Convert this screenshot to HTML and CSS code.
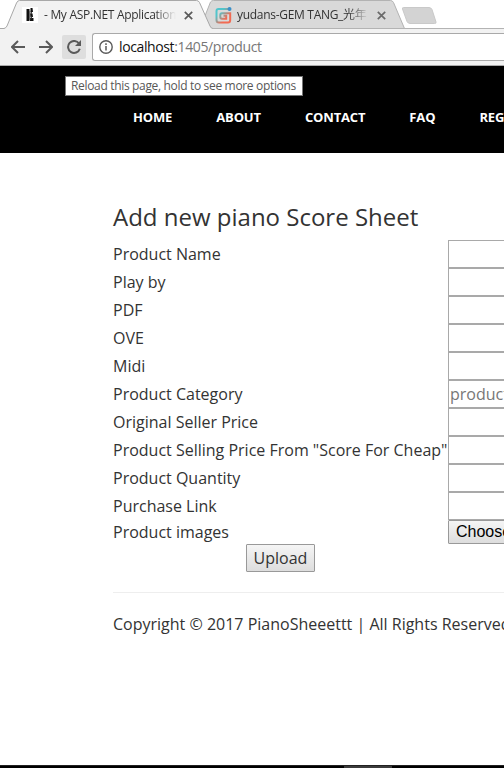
FILE: index.html
```html
<!DOCTYPE html>
<html lang="en">
<head>
<meta charset="utf-8">
<title>Add new piano Score Sheet</title>
<link rel="stylesheet" href="styles.css">
</head>
<body>
<div class="tabs">
  <svg class="tab-shapes" width="504" height="29" viewBox="0 0 504 29">
    <path d="M0 28.500H504" stroke="#b3b3b3"/>
    <path d="M200 28.500L210.500 2Q211.500 .5 213.500 .5H390.500Q392.500 .5 393.500 2.500L404.500 28.500Z" fill="#d9d9d9" stroke="#b3b3b3"/>
    <path d="M0 28.500H4Q6 28 7 26L16.500 3Q17.500 .5 19.500 .5H196.500Q198.500 .5 199.500 2.500L210 26Q211 28.500 213 28.500V29.500H5Z" fill="#f2f2f2"/>
    <path d="M0 28.500H4Q6 28 7 26L16.500 3Q17.500 .5 19.500 .5H196.500Q198.500 .5 199.500 2.500L210 26Q211 28.500 213 28.500" fill="none" stroke="#a8a8a8"/>
    <path d="M403.500 7.500H429Q431 7.500 432 9.500L436 22Q436.500 23.500 434.500 23.500H410Q408 23.500 407 21.500L402.500 9Q402 7.500 403.500 7.500Z" fill="#d3d3d3" stroke="#c9c9c9"/>
  </svg>
  <div class="tab first">
    <svg class="favicon" width="16" height="16" viewBox="0 0 16 16"><path d="M0 0H16V16H0Z" fill="#fff"/><path d="M4.500 2H7.500V14H4.500ZM8.500 1H10.500L11 5H8.500ZM8 6.500H10.500L11 10H8.500ZM8 11H11.500V14H8Z" fill="#111"/><path d="M8 4V13M9.500 5V7M9.500 9.500V11.500" stroke="#444"/></svg>
    <span class="tab-title">- My ASP.NET Application</span>
    <svg class="close" width="9" height="9" viewBox="0 0 9 9"><path d="M.8 .8L8.200 8.200M8.200 .8L.8 8.200" stroke="#5a5a5a" stroke-width="1.700"/></svg>
  </div>
  <div class="tab second">
    <svg class="favicon" width="17" height="17" viewBox="0 0 17 17" fill="none">
      <defs><linearGradient id="g" x1="0" y1="0" x2="1" y2="1"><stop offset=".25" stop-color="#50c5cc"/><stop offset=".7" stop-color="#f26a52"/></linearGradient></defs>
      <path d="M14 2H3.500Q1.500 2 1.500 4V13Q1.500 15.500 4 15.500H13Q15.200 15.500 15.200 13V6.200H7Q5.300 6.200 5.300 8V10Q5.300 11.800 7 11.800H11.200V8.800H8.500" stroke="url(#g)" stroke-width="2"/><circle cx="14.500" cy="2" r="2" fill="#398fc8"/>
    </svg>
    <span class="tab-title">yudans-GEM TANG_光年</span>
    <svg class="close" width="9" height="9" viewBox="0 0 9 9"><path d="M.8 .8L8.200 8.200M8.200 .8L.8 8.200" stroke="#6a6a6a" stroke-width="1.700"/></svg>
  </div>
</div>
<div class="toolbar">
  <svg class="nav-icon" width="14" height="14" viewBox="0 0 14 14"><path d="M14 7H1.500M7 1L1 7L7 13" class="stroke"/></svg>
  <svg class="nav-icon forward" width="14" height="14" viewBox="0 0 14 14"><path d="M0 7H12.500M7 1L13 7L7 13" class="stroke"/></svg>
  <span class="reload"><svg width="14" height="14" viewBox="0 0 14 14"><path d="M12 3.500A6 6 0 1 0 12.800 8.800" class="stroke"/><path d="M14 0V6H8Z" fill="#5a5a5a"/></svg></span>
  <div class="address">
    <svg width="14" height="14" viewBox="0 0 14 14" fill="none"><circle cx="7" cy="7" r="6.200" stroke="#5a5a5a" stroke-width="1.400"/><path d="M7 6V10.500M7 3.300V4.900" stroke="#5a5a5a" stroke-width="1.500"/></svg>
    <span class="url">localhost<span>:1405/product</span></span>
  </div>
  <div class="tooltip">Reload this page, hold to see more options</div>
</div>
<nav class="menu"><a>HOME</a><a>ABOUT</a><a>CONTACT</a><a>FAQ</a><a>REGISTER</a></nav>
<main class="content">
  <h1>Add new piano Score Sheet</h1>
  <div class="form">
    <label>Product Name</label><input>
    <label>Play by</label><input>
    <label>PDF</label><input>
    <label>OVE</label><input>
    <label>Midi</label><input>
    <label>Product Category</label><input placeholder="product category">
    <label>Original Seller Price</label><input>
    <label>Product Selling Price From "Score For Cheap"</label><input>
    <label>Product Quantity</label><input>
    <label>Purchase Link</label><input>
    <label class="last">Product images</label><button class="choose">Choose File</button>
    <div class="action"><button class="upload">Upload</button></div>
  </div>
  <footer>Copyright © 2017 PianoSheeettt | All Rights Reserved</footer>
</main>
<div class="taskbar"><span></span></div>
</body>
</html>
```
FILE: styles.css
```css
* { box-sizing: border-box; }
body {
  margin: 0;
  width: 504px;
  height: 768px;
  overflow: hidden;
  display: flex;
  flex-direction: column;
  background: #fff;
  color: #333;
  font: 16px/24px "Open Sans", "Noto Sans CJK SC", sans-serif;
}
svg { display: block; flex: none; }
.tabs { position: relative; height: 29px; display: flex; flex: none; }
.tab-shapes { position: absolute; left: 0; top: 0; }
.tab { position: relative; display: flex; align-items: center; height: 30px; }
.first { width: 211px; padding-left: 22px; }
.second { padding-left: 4px; }
.tab-title {
  width: 132px;
  margin-left: 6px;
  overflow: hidden;
  white-space: nowrap;
  font-size: 12px;
  letter-spacing: -0.3px;
  line-height: 18px;
  -webkit-mask-image: linear-gradient(90deg, #000 84%, transparent);
  mask-image: linear-gradient(90deg, #000 84%, transparent);
}
.second .tab-title { margin-left: 5px; width: 132px; letter-spacing: -0.3px; }
.close { margin-left: 8px; }
.toolbar {
  position: relative;
  height: 37px;
  flex: none;
  display: flex;
  align-items: center;
  padding-left: 11px;
  background: #f2f2f2;
  border-bottom: 1px solid #aaa;
}
.stroke { fill: none; stroke: #5a5a5a; stroke-width: 2; }
.forward { margin-left: 14px; }
.reload { display: flex; align-items: center; justify-content: center; width: 24px; height: 24px; margin-left: 9px; background: #dedede; border-radius: 2px; }
.address {
  flex: 1;
  display: flex;
  align-items: center;
  height: 28px;
  margin-left: 6px;
  padding-left: 6px;
  background: #fff;
  border: 1px solid #a9a9a9;
  border-right: 0;
  border-radius: 3px 0 0 3px;
}
.url { margin-left: 6px; font-size: 14px; letter-spacing: -0.38px; color: #111; }
.url span { color: #777; }
.tooltip {
  position: absolute;
  left: 65px;
  top: 47px;
  width: 238px;
  height: 20px;
  padding-left: 5px;
  border: 1px solid #767676;
  background: #fff;
  color: #575757;
  font-size: 12px;
  line-height: 18px;
  letter-spacing: -0.33px;
  white-space: nowrap;
}
.menu {
  height: 87px;
  flex: none;
  display: flex;
  gap: 44px;
  padding: 39px 0 0 133px;
  background: #000;
  color: #fff;
  font-size: 13px;
  font-weight: 700;
  letter-spacing: -0.15px;
}
.content { width: 600px; padding: 50px 0 0 113px; }
h1 { margin: 0 0 10px; font-size: 24px; line-height: 27px; font-weight: 400; white-space: nowrap; }
.form { display: grid; grid-template-columns: 335px 260px; }
.form label { height: 28px; line-height: 28px; white-space: nowrap; }
.form .last { height: 24px; line-height: 24px; }
input { height: 28px; width: 260px; margin: 0; padding: 1px; border: 1px solid #a9a9a9; border-radius: 0; font: inherit; }
input::placeholder { color: #777; }
button { margin: 0; border: 1px solid #999; border-radius: 1px; background: linear-gradient(#f5f5f5, #ddd); }
.choose { width: 104px; height: 24px; padding: 0 7px; font: 16px "Liberation Sans", sans-serif; text-align: left; color: #000; }
.action { display: flex; justify-content: center; }
.upload { width: 69px; height: 28px; padding: 0; font: inherit; color: #333; }
footer { width: 480px; margin-top: 20px; padding-top: 19px; border-top: 1px solid #eee; white-space: nowrap; }
.taskbar { height: 3px; flex: none; margin-top: auto; padding-left: 344px; background: #000; border-top: 1px solid #222; }
.taskbar span { display: block; width: 48px; height: 2px; background: #3b3b3b; }
```
